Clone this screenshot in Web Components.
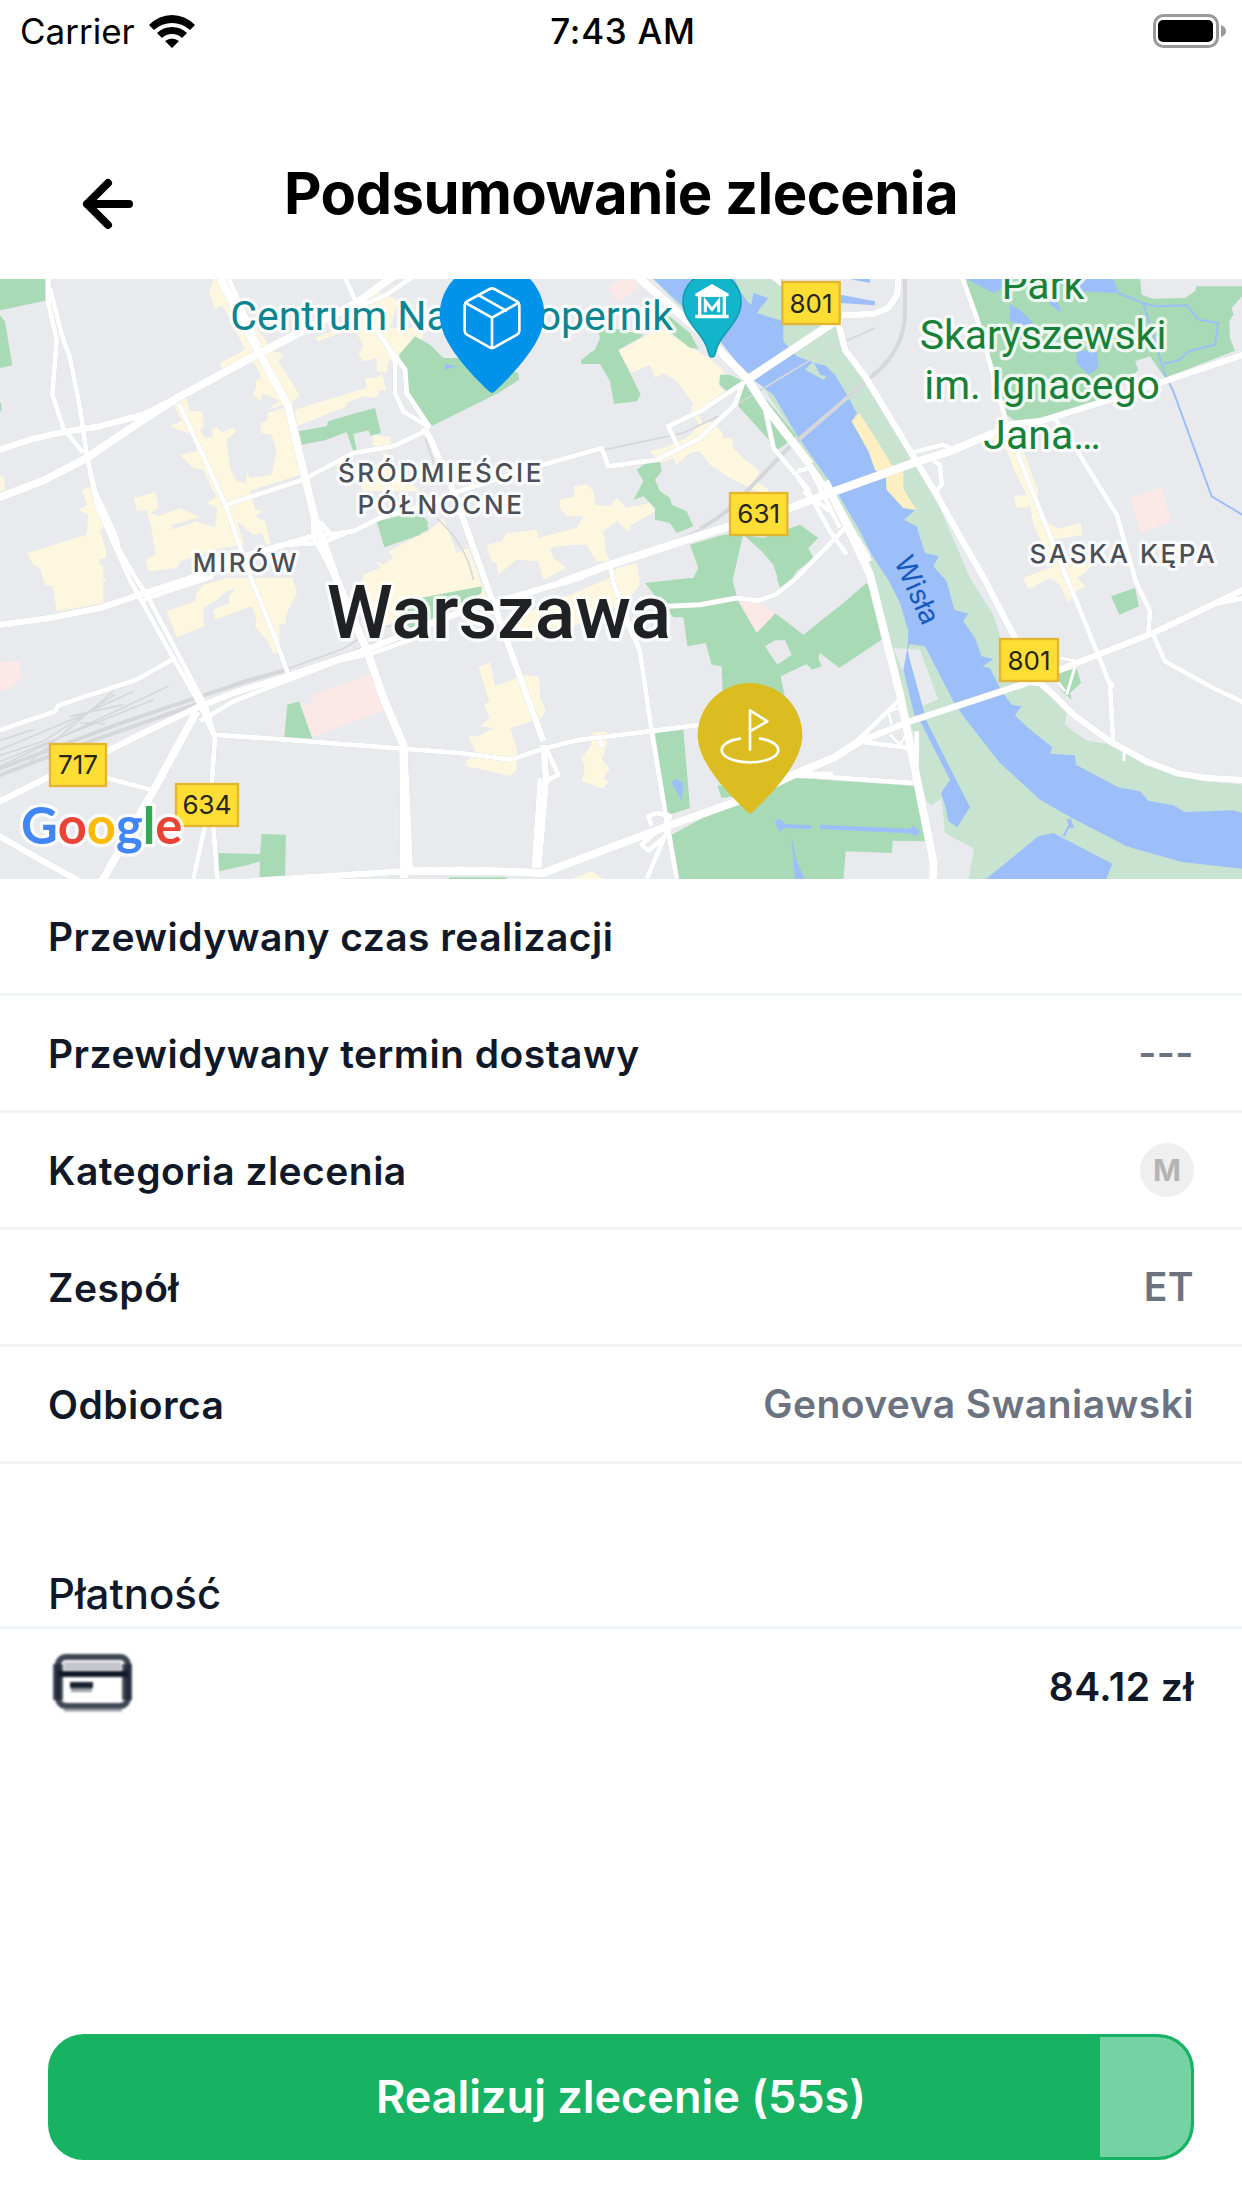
<!DOCTYPE html>
<html lang="pl">
<head>
<meta charset="utf-8">
<meta name="viewport" content="width=device-width, initial-scale=1">
<title>Podsumowanie zlecenia</title>
<style>
  html, body { margin: 0; background: #fff; }
  body { font-family: Inter, "Liberation Sans", sans-serif; color: #111827; }
</style>
</head>
<body>
<order-summary>
  <status-bar slot="status" carrier="Carrier" time="7:43 AM"></status-bar>
  <page-header slot="header">Podsumowanie zlecenia</page-header>
  <route-map slot="map"></route-map>
  <detail-row label="Przewidywany czas realizacji"></detail-row>
  <detail-row label="Przewidywany termin dostawy">---</detail-row>
  <detail-row label="Kategoria zlecenia"><size-badge>M</size-badge></detail-row>
  <detail-row label="Zespół">ET</detail-row>
  <detail-row label="Odbiorca">Genoveva Swaniawski</detail-row>
  <payment-section slot="payment" amount="84.12 zł">Płatność</payment-section>
  <countdown-button slot="action" progress="92">Realizuj zlecenie (55s)</countdown-button>
</order-summary>

<template id="order-summary">
  <style>
    :host { display: flex; flex-direction: column; min-height: 100vh; }
    footer { margin-top: auto; padding: 48px; }
  </style>
  <slot name="status"></slot>
  <slot name="header"></slot>
  <main>
    <slot name="map"></slot>
    <slot></slot>
    <slot name="payment"></slot>
  </main>
  <footer><slot name="action"></slot></footer>
</template>

<template id="status-bar">
  <style>
    :host { display: grid; grid-template-columns: 1fr auto 1fr; align-items: center; height: 60px; padding: 2px 16px 0 20px; box-sizing: border-box; font-size: 35px; line-height: 42px; color: #000; }
    .left { display: flex; align-items: center; gap: 14px; }
    .time { font-weight: 500; letter-spacing: 0.02em; }
    .battery { justify-self: end; }
    svg { display: block; }
  </style>
  <div class="left"><span class="carrier"></span>
    <svg width="46" height="33" viewBox="0 0 46 33"><path d="M0 10Q10 0 23 0t23 10l-5 5Q33 8 23 8T5 15zM8 18q6-6 15-6t15 6l-5 5q-4-4-10-4t-10 4zM16 26q7-5 14 0l-7 7z"/></svg>
  </div>
  <span class="time"></span>
  <svg class="battery" width="73" height="34" viewBox="0 0 73 34"><rect x="1.500" y="1.500" width="63" height="31" rx="9" fill="none" stroke="#999" stroke-width="3"/><rect x="5" y="6" width="55" height="22" rx="5"/><path d="M68 11q5 2 5 6t-5 6z" fill="#999"/></svg>
</template>

<template id="page-header">
  <style>
    :host { display: grid; grid-template-columns: 1fr auto 1fr; align-items: center; height: 219px; box-sizing: border-box; padding: 68px 80px 0; color: #000; }
    button { justify-self: start; padding: 0; border: 0; background: none; color: inherit; }
    h1 { margin: 0 0 22px; font-size: 58px; line-height: 70px; font-weight: 700; letter-spacing: -0.01em; }
    svg { display: block; }
  </style>
  <button type="button" aria-label="Wstecz"><svg width="56" height="56" viewBox="0 0 56 56" fill="none" stroke="currentColor" stroke-width="8" stroke-linecap="round" stroke-linejoin="round"><path d="M49 28H7M28 7L7 28l21 21"/></svg></button>
  <h1><slot></slot></h1>
</template>

<template id="detail-row">
  <style>
    :host { display: flex; align-items: center; justify-content: space-between; height: 114px; padding: 0 48px; border-bottom: 3px solid #f3f4f8; font-size: 39px; line-height: 50px; font-weight: 600; letter-spacing: 0.012em; }
    .label { padding-top: 2px; }
    .value { color: #6b7280; }
  </style>
  <span class="label"></span><span class="value"><slot></slot></span>
</template>

<template id="size-badge">
  <style>
    :host { display: flex; align-items: center; justify-content: center; width: 54px; height: 54px; border-radius: 27px; background: #efefef; color: #b4b4b4; font-size: 30px; line-height: 36px; font-weight: 700; letter-spacing: 0; }
  </style>
  <slot></slot>
</template>

<template id="payment-section">
  <style>
    :host { display: block; padding-top: 104px; }
    h2 { margin: 0; padding: 0 48px 6px; border-bottom: 3px solid #f1f3f8; font-size: 42px; line-height: 52px; font-weight: 500; }
    .row { display: flex; align-items: flex-start; justify-content: space-between; padding: 22px 48px 0 51px; }
    .amount { padding-top: 12px; font-size: 39px; line-height: 48px; font-weight: 600; letter-spacing: 0.012em; }
    svg { display: block; filter: blur(1px); }
  </style>
  <h2><slot></slot></h2>
  <div class="row">
    <svg width="84" height="66" viewBox="0 0 84 66" fill="none">
      <path d="M13 11H70V19H13z" fill="#c4c6cb"/>
      <path d="M7 13v36M76 13v36" stroke="#4b515d" stroke-width="10"/>
      <rect x="7" y="6" width="70" height="49" rx="8" stroke="#1d2636" stroke-opacity=".85" stroke-width="6"/>
      <path d="M7 23H77" stroke="#111827" stroke-width="6"/>
      <path d="M19 34H42" stroke="#182130" stroke-width="6"/><path d="M20 39H41" stroke="#9a9ea6" stroke-width="4"/>
      <path d="M13 59H71" stroke="#9a9ea6" stroke-width="3"/>
    </svg>
    <span class="amount"></span>
  </div>
</template>

<template id="countdown-button">
  <style>
    :host { display: block; }
    button { display: block; width: 100%; height: 126px; padding: 0; border: 3px solid #18b263; border-radius: 36px; color: #fff; font: 600 45px/54px Inter, sans-serif; background: linear-gradient(to right, #18b263 var(--progress), #74d2a3 var(--progress)) padding-box, #18b263; }
  </style>
  <button type="button"><slot></slot></button>
</template>

<template id="route-map">
  <style>
    :host { display: block; height: 600px; overflow: hidden; background: #e8eaed; }
    svg { display: block; width: 100%; height: 100%; }
    .park { fill: #a8dab5; } .bank { fill: #c8e4d1; } .water { fill: #9cbff9; }
    .built { fill: #fef7e0; } .health { fill: #fce8e6; } .sand { fill: #feefc3; } .land { fill: #e8eaed; }
    .roads { fill: none; stroke: #fff; stroke-linejoin: round; stroke-width: 15; filter: drop-shadow(0 0 1px #b9bcc1); }
    .wide { stroke-width: 25; } .mid { stroke-width: 20; } .thin { stroke-width: 9; }
    .rail { fill: none; stroke: #d5d7da; stroke-width: 5; }
    .stream { fill: none; stroke: #9cbff9; stroke-width: 6; }
    .halo text { stroke: #fff; stroke-opacity: .8; stroke-width: 20; stroke-linejoin: round; paint-order: stroke; }
    .area text { font-size: 78px; font-weight: 500; letter-spacing: .1em; fill: #4b4f55; }
    .poi text { font-family: Roboto, Inter, sans-serif; font-size: 123px; }
    .city { font-family: Roboto, Inter, sans-serif; font-size: 225px; font-weight: 500; fill: #202124; }
    .brand { font-family: Lato, Inter, sans-serif; font-size: 152px; font-weight: 700; }
    .shield rect { fill: #fedd35; stroke: #e2b631; stroke-width: 7; }
    .shield text { font-size: 78px; fill: #26261f; }
    .line { fill: none; stroke: #fff; stroke-width: 8; stroke-linecap: round; stroke-linejoin: round; }
    text { text-anchor: middle; }
  </style>
  <svg viewBox="0 0 3726 1800" preserveAspectRatio="xMidYMid slice" role="img" aria-label="Mapa">
    <defs><path id="drop" d="M0 0Q-5 0-12-8C-60-55-157-150-157-234A157 157 0 0 1 157-234C157-150 60-55 12-8Q5 0 0 0Z"/></defs>

    <!-- land cover, north-west -->
    <g transform="translate(0 -3)">
      <g class="park"><path d="M0 0H135V68L0 97zM0 112L15 130 37 262 0 270zM0 375H4V400H0z"/></g>
      <g class="built">
        <path d="M640 3H675L735 110 800 190 805 215 850 228 835 250 898 350 880 368 872 400 850 380 800 395 840 370 790 345 780 370 760 350 770 320 765 310 785 300 768 262 745 250 665 270 660 255 735 215 690 120 665 80 645 95 628 40z"/>
        <path d="M945 180L1020 150 1130 40 1180 60 1195 70 1170 150H1270V180L1190 240 1165 250 1160 285 1130 280V240L1090 250 1075 230 1090 200 1070 165H1020L955 190z"/>
        <path d="M885 395L1030 350 1100 330 1095 300H1130L1145 285 1160 338 1140 335 1130 360 1090 355 1040 375 1035 388 890 445z"/>
        <path d="M520 375L560 360 570 400H605L612 440 600 455 615 480 640 475 635 455 650 447 665 462 700 450 708 460 680 485 690 570 710 610 740 615 738 583 750 600 815 590 830 520 815 470 785 465 780 437 800 430 805 405 850 390 870 410 900 590 750 638 765 695 785 700 765 715 795 730 812 800H800L785 765 760 770 712 730 732 800 655 812 645 750 652 690 620 675 650 655 640 640 610 575 580 570 540 530 605 515 575 470 510 445 545 430z"/>
        <path d="M402 660L468 642 475 690 450 705 475 715 540 690 600 718 515 740V755L590 730 650 750 655 812 540 850 530 870 445 880 437 845 467 830 455 755 440 697 410 700z"/>
        <path d="M245 635L270 627 300 690 320 730 300 760 318 815V840L298 845V862H310V975L170 1000 160 925 130 906 120 870 100 860 82 825 260 770 265 710 235 695 262 680z"/>
        <path d="M0 595H10L15 635 0 640zM1118 470L1172 478V500L1135 505 1118 500zM1150 520L1215 600 1260 640 1090 640 1080 620 1150 560z"/>
        <path d="M1075 930L1090 890 1140 870 1130 850 1150 860 1180 840 1165 820 1285 760 1330 720 1370 825 1405 810 1460 960 1260 975 1150 1050z"/>
      </g>
      <g class="park"><path d="M897 460L980 445 985 430 1050 410 1125 390 1143 465 1112 473 1105 457 1060 468 1070 515 1060 520 1040 462 975 487 905 500zM1130 730L1260 700 1285 735 1260 770 1153 808z"/></g>
    </g>

    <!-- land cover, north -->
    <g transform="translate(1230 -3)">
      <g class="park">
        <path d="M-33 230L15 175 60 200 100 240H160L325 285 327 305 265 345 64 445-10 350-15 270z"/>
        <path d="M0 740L50 730 55 755 0 780z"/>
      </g>
      <g class="health"><path d="M595 30L620 12 650 3H670L687 28 622 75z"/></g>
      <g class="built">
        <path d="M625 220L695 180 750 150 840 205 895 240 935 270 945 300 925 320 945 340 860 400 880 440 900 430 935 460 940 480 965 480 970 510 1000 540 1050 580 1035 605 1080 640 1075 650 1030 635 960 600 900 560 870 520 840 525 800 560 790 540 750 555 720 520 760 510 830 480 870 440 840 400 850 375 830 350 800 310 760 285 735 300 720 260 665 285z"/>
        <path d="M490 625L530 618 550 640 555 680 600 685 620 660 650 690 720 675 735 700 665 740 655 760 620 730 580 760 590 830 600 850H560L530 800 480 800 420 810 430 840 470 870 400 906 385 850 320 845 265 890 260 855 245 850 230 800 275 790 290 765 380 755 385 780 500 750 520 715 470 715 450 690V665L495 655zM620 870L680 855 690 920 650 970 480 1050 340 1090 290 1030 600 900z"/>
      </g>
      <g class="park">
        <path d="M560 140L700 170 690 180 625 215 692 350 680 370 612 378 600 310 570 258H515L512 248 540 225 555 215 570 180z"/>
        <path d="M680 575L710 555 750 552 755 580 735 605 750 640 780 660 785 680 830 700 850 745 800 765 780 735 735 725V690L700 655 670 665 690 630 700 610z"/>
        <path d="M840 800L940 770 1000 765 985 832 1055 820 1000 770 1060 780 1170 740 1225 780 1195 810 1210 840 1160 880 1135 920H1110L1090 860 1055 820 985 832 965 920H840L865 870z"/>
      </g>
      <path class="water" d="M105 257L140 265 105 275z"/>
    </g>

    <!-- river valley and the eastern district -->
    <g transform="translate(2460 -3)">
      <path class="bank" d="M-500 3H-115L0 140H45L75 215 150 340 275 545 360 690 450 900 520 1010 545 1090 590 1210 660 1220 740 1305 735 1340 800 1388 880 1400 980 1465 1160 1510 1270 1520V1806H445L462 1712 375 1665 365 1560 335 1583 320 1570 300 1500 290 1400 240 1230 215 1100 155 906 135 850 155 830 20 630-70 480-230 240-380 130z"/>
      <g class="park"><path d="M-475 95L-390 165-365 212-390 210-440 170zM-300 290L-270 290-230 310-275 345-302 318zM-300 210L-130 400-70 475-127 515-245 385-230 310-290 240z"/></g>
      <path class="water" d="M-500 3H-255L-245 30-215 75-205 78-200 45-155 60-190 105-110 130V190L-70 235-5 258 15 262 45 290 75 340 110 405 95 430 150 520 165 575 198 600 200 635 250 690 285 697 252 725 290 745 315 825 357 835 340 865 380 910 403 995 445 1007 430 1030 465 1080 485 1135 520 1143 488 1165 510 1170 545 1240 575 1280 605 1285 585 1312 625 1350 697 1408 690 1427 765 1432 768 1460 895 1528 960 1540 985 1568 1060 1582 1095 1602 1240 1597 1270 1605V1773L1085 1752 920 1705 760 1622 660 1565 540 1455 430 1315 400 1270 315 1105 270 1098 262 1115 265 1060 240 975 205 906 155 830 120 760 55 650 0 570-70 470-140 350-220 290-300 190-450 50z"/>
      <path class="bank" d="M-45 275L-20 250 0 290 20 295 10 305z"/>
      <path class="sand" d="M95 430L118 405 160 470 215 560 250 575V630L270 665 290 695 250 690 200 635 198 600 165 575 145 520z"/>
      <path class="park" d="M437 3H960L965 50 1000 62 1095 60 1125 40 1130 25H1270V50L1235 90 1240 110 1228 130 1230 180 1245 218 1035 300 990 235 945 250 955 275 860 370 640 432 590 432 560 410z"/>
      <path class="water" d="M440 3H560V25L520 45zM700 3H875L890 45 760 40zM570 80L600 95 635 130 640 150 570 130zM770 220L830 215 835 270 805 290 770 255zM690 60L710 65 725 105 690 80zM62 50L165 70V82L62 75zM90 3H150V15L100 5z"/>
      <path class="stream" d="M875 3L895 45 970 75 1035 290 1060 340 1175 655 1270 712M965 75L1010 85 1100 82 1135 125 1195 135 1185 200 1105 220 1080 245 1030 258"/>
      <path class="health" d="M930 660L1025 628 1055 730 963 765z"/>
      <path class="built" d="M500 475L560 480 610 520 655 640 650 670 685 735 715 752 782 735 787 770 700 785 740 850 820 860 800 880 770 900 797 925 770 940 745 975 720 920 690 900 625 935 610 900 700 865 640 740 630 685 590 690 582 655 620 650 580 570 560 515z"/>
    </g>

    <!-- land cover, south-west -->
    <g transform="translate(0 897)">
      <g class="built"><path d="M130 0H320L315 10 303 15V75L170 100 160 25 135 22zM500 100L585 70 590 45 610 20 680 0H880L890 45 858 110V135L838 140V225H820L800 185 765 145 770 120 755 85 645 125 640 95 690 75 685 60 705 30 680 40 650 65 610 90 612 145 530 178z"/></g>
      <g class="health"><path d="M0 252L60 248 63 305 20 340 0 332zM905 388L940 370 935 352 1110 290 1157 395 937 478z"/></g>
      <g class="park"><path d="M862 380L897 370 937 482 853 477zM655 825L780 828 785 768 858 770 855 903H778L780 850 740 862 657 880z"/></g>
    </g>

    <!-- land cover, south -->
    <g transform="translate(1230 897)">
      <path class="built" d="M205 268L240 252 255 325 345 292 387 297 390 360 407 395 395 420 300 450 320 510V575L300 595 240 580 170 565V545L200 530 175 475H205L250 450 210 445 240 420 222 380 238 370zM545 465L590 460V500L575 545 600 570 580 600 597 610 580 632 515 610 525 570 515 540 545 500zM485 903L545 880 580 903z"/>
      <path class="park" d="M30 60L215 25V45L120 100 0 150-30 110zM705 15L840 0H965L985 70 1095 105 1180 170 1300 75 1370 15 1385 30 1415 185 1288 270 1230 225 1225 240 1235 265 1205 275 1190 258 1112 295 1125 360V420H940L935 265 905 260 887 195 832 205 820 118H790L740 60zM735 465L820 455 840 690 785 708 770 700zM922 622L950 625 970 655 935 660zM785 770L980 665 1160 600 1470 620 1515 625 1548 790 1448 788 1445 825 1307 820 1300 906H803zM117 898H290V906H117zM1100 0H1135L1130 20 1110 30z"/>
      <path class="land" d="M1065 205L1095 187H1125L1145 230 1102 260z"/>
      <path class="health" d="M985 70L1045 75 1097 105 1040 165z"/>
      <path class="water" d="M785 615L797 602 820 615 815 668zM1095 730L1110 722 1125 738 1203 742V753L1125 750 1108 762zM1230 740L1500 752 1510 743 1530 760 1520 775 1500 766 1230 753zM1143 770L1160 850 1185 903H1155z"/>
    </g>

    <!-- land cover, south-east -->
    <g transform="translate(2460 897)">
      <path class="land" d="M220 210L300 215 355 365 305 385 290 380z"/>
      <path class="water" d="M262 210L250 275 283 410 303 435 390 605 363 645 375 680 385 730 412 747 450 688 320 430 268 240zM498 903L655 775 700 765 877 857 858 906zM727 775L745 740 740 725 752 720 762 750H747L735 775z"/>
      <path class="park" d="M873 55L945 30 957 85 898 110zM700 290L770 270 783 315 750 345 755 365 725 340z"/>
    </g>

    <g class="rail">
      <path transform="translate(0 897)" d="M-10 490L100 455M-10 520L250 410 400 340M-10 535L130 490 345 350M-10 555L300 430 460 365M-10 570L220 460 505 325M80 560L340 340M210 415L370 380M240 435L315 437"/>
      <path stroke-width="12" transform="translate(0 897)" d="M-10 575L150 515 350 440 600 355 740 310 860 275M-10 595L200 515 600 375"/>
      <path transform="translate(0 897)" d="M600 355L740 305 870 270 1030 212 1130 150 1260 130M640 365L1050 222 1240 150"/>
      <path transform="translate(1230 -3)" d="M735 812L870 755M585 515L820 465 925 415M980 380L1260 210 1395 150M45 480L80 580M80 720Q170 800 190 906"/>
      <path stroke-width="12" transform="translate(1230 -3)" d="M870 752Q950 710 1010 640L1130 515 1270 395 1380 300Q1485 220 1485 100V0"/>
    </g>

    <g class="roads">
      <g transform="translate(0 -3)">
        <path class="wide" d="M-20 665L130 608 260 540 430 425 540 355 780 225 1070 75 1200 -20"/>
        <path class="mid" d="M-10 518L100 482 200 460 300 445 430 410 550 350M540 915L715 840 940 775"/>
        <path class="wide" d="M660 0L775 220 865 385 915 600 945 720 1010 906 1050 1000 1100 1115 1150 1260 1210 1400 1213 1800"/>
        <path d="M685 0L775 200M145 0V75L170 185 157 350 190 450 250 525M150 30L185 170 210 240 240 390 262 540 285 640 350 780 355 810 410 906 440 950 540 1140 620 1290 645 1380 635 1520M270 580L290 680 390 906 520 1140 600 1280 640 1370"/>
        <path d="M535 375L615 545 680 690 755 906 825 1080 865 1190M680 680L910 605 1060 525 1180 505 1275 460"/>
        <path d="M860 800L960 795 1040 765M940 720V775L1010 906M960 730L1000 780 960 800M940 775L1060 760 1140 720 1260 685 1360 650M1035 0L1070 75 1160 200 1215 275 1220 345 1290 450M1160 200L1185 250V345L1210 400 1290 450M1070 90L1160 50 1240 -5"/>
      </g>
      <g transform="translate(1230 -3)">
        <path class="mid" d="M40 450L60 480 130 640 225 906 270 1030 400 1390"/>
        <path d="M130 645L400 560 560 515 575 510 595 565 740 545 800 515 870 480 975 380 1000 310M1000 315L870 400 775 445 805 510M1065 390L1090 510 1200 640"/>
        <path class="wide" d="M670 -15L890 180 1010 300 1065 385 1200 560M1290 120L1005 310M450 915L600 860 830 785 960 745 1140 690 1260 645 1510 555 1620 520 1750 465"/>
        <path d="M1200 560L1290 690 1380 850M1160 580L1200 570 1290 750M1165 600L1200 650 1260 760 1310 830M1180 640L1260 700M1080 -10L1130 30M600 855L610 915 690 1120 725 1360 765 1600 800 1803M1310 745L1160 900 1100 948 1045 968 980 960 870 980 770 985"/>
      </g>
      <g transform="translate(2460 -3)">
        <path d="M425 -5L470 120 505 240 550 400 560 440 600 545 740 900 790 1020 870 1220 880 1400M700 415L760 500 890 710 945 900M270 530L290 520 370 500 400 515M340 550L360 560 365 620 345 645"/>
        <path class="mid" d="M235 0L232 50 205 90 160 108 65 112M520 465L560 440 660 430 870 365 1270 230M50 115L75 215 135 295 350 650 400 740 495 906 595 1100"/>
        <path class="wide" d="M15 610L65 710 150 890 190 1050 240 1250 270 1400 310 1600 340 1750V1810"/>
      </g>
      <g transform="translate(0 897)">
        <path class="mid" d="M-10 142L150 120 300 90 420 50 620 -15M-10 675L150 595 310 525 430 465 600 385 700 345 860 295 1100 215 1260 150 1390 100 1530 60 1750 -5M-10 770L130 850 240 910M750 910L1210 880 1400 875"/>
        <path d="M420 70L480 48 640 -5M600 430L700 370 1010 250 1120 225 1260 175M320 600L450 635M640 470L900 488 1210 512 1380 525 1535 545 1630 512 1730 487 1950 460 2100 440M615 745L580 903M640 745L652 903M1215 500L1232 880"/>
        <path class="wide" d="M590 400L470 620 300 920"/>
        <path d="M-10 460L165 400 175 382 410 305 520 243"/>
      </g>
      <g transform="translate(1230 897)">
        <path class="wide" d="M-20 880L200 878 400 885 770 745 980 670 1150 590 1270 540 1350 490"/>
        <path class="mid" d="M1150 590L1270 590M400 500L408 600 385 870"/>
        <path d="M410 515L445 590 415 605M390 600L372 870M765 745L780 715 740 705 715 715 725 745M740 760L695 800 715 818 760 780M775 750L710 903M570 485L577 507M640 110L690 220"/>
      </g>
      <g transform="translate(2460 897)">
        <path class="mid" d="M120 490L270 430 620 315 720 275 1000 165 1270 35M620 312L660 315 700 350 760 410 870 490 980 550 1070 585 1160 600 1270 606"/>
        <path d="M-10 595L200 610 280 615M940 -5L990 100 985 165M1000 170L1035 250 1180 330 1280 378M1180 80L1270 60M110 490L235 370M130 492L270 510M290 460L290 560M875 310V330"/>
        <path class="thin" d="M205 400L215 440M210 470L240 500 270 450M205 400L240 390M720 240L770 250 740 350M700 295L735 340M912 520V550"/>
      </g>
    </g>

    <g class="halo">
      <g class="poi">
        <g fill="#0c8590"><text x="1355" y="154">Centrum Nauki Kopernik</text></g>
        <g fill="#188038"><text x="3129" y="59">Park</text><text x="3129" y="210">Skaryszewski</text><text x="3126" y="359">im. Ignacego</text><text x="3126" y="510">Jana…</text></g>
      </g>
      <g class="area"><text x="1323" y="609">ŚRÓDMIEŚCIE</text><text x="1323" y="705">PÓŁNOCNE</text><text x="738" y="878">MIRÓW</text><text x="3370" y="852">SASKA KĘPA</text></g>
      <text class="city" x="1497" y="1077">Warszawa</text>
    </g>
    <text transform="translate(2725 945) rotate(66)" font-size="84" fill="#185abc">Wisła</text>

    <g class="shield">
      <rect x="2347" y="9" width="172" height="126"/><text x="2433" y="101">801</text>
      <rect x="2190" y="642" width="172" height="126"/><text x="2276" y="732">631</text>
      <rect x="3000" y="1080" width="174" height="126"/><text x="3087" y="1172">801</text>
      <rect x="150" y="1395" width="168" height="126"/><text x="234" y="1486">717</text>
      <rect x="528" y="1515" width="186" height="126"/><text x="621" y="1604">634</text>
    </g>

    <g transform="translate(2136 234)">
      <path d="M0 0Q-7 0-10-12C-20-70-87-100-87-166A87 87 0 0 1 87-166C87-100 20-70 10-12Q7 0 0 0Z" fill="#12b5cb" stroke="#129eaf" stroke-width="5"/>
      <path d="M-50-182V-190L0-219 50-190V-182H42V-127H50V-116H-50V-127H-42V-182zM-32-180V-127H32V-180z" fill="#fff" fill-rule="evenodd"/>
      <path d="M-20-134V-168L0-143 20-168V-134" fill="none" stroke="#fff" stroke-width="9"/>
    </g>
    <g transform="translate(1476 342)">
      <use href="#drop" fill="#0093e9"/>
      <path class="line" d="M-7-312Q0-316 7-312L75-275Q82-271 82-264V-186Q82-179 75-175L7-137Q0-133-7-137L-75-175Q-82-179-82-186V-264Q-82-271-75-275zM-79-270L0-226 79-270M0-226V-135M-39-293L42-247"/>
    </g>
    <g transform="translate(2250 1603)">
      <use href="#drop" fill="#dbbc21"/>
      <path class="line" d="M0-191V-309L52-276 0-246M-30-224C-60-220-85-207-85-189C-85-169-47-153 0-153S85-169 85-189C85-207 60-220 30-224"/>
    </g>
    <g class="halo">
      <text class="brand" x="305" y="1696"><tspan fill="#4285f4">G</tspan><tspan fill="#ea4335">o</tspan><tspan fill="#fbbc05">o</tspan><tspan fill="#4285f4">g</tspan><tspan fill="#34a853">l</tspan><tspan fill="#ea4335">e</tspan></text>
    </g>
  </svg>
</template>

<script>
  class TemplateElement extends HTMLElement {
    constructor() {
      super();
      const template = document.getElementById(this.localName);
      this.attachShadow({ mode: 'open' }).append(template.content.cloneNode(true));
    }
    fill(selector, attribute) {
      this.shadowRoot.querySelector(selector).textContent = this.getAttribute(attribute) || '';
    }
  }
  customElements.define('order-summary', class extends TemplateElement {});
  customElements.define('status-bar', class extends TemplateElement {
    connectedCallback() { this.fill('.carrier', 'carrier'); this.fill('.time', 'time'); }
  });
  customElements.define('page-header', class extends TemplateElement {});
  customElements.define('route-map', class extends TemplateElement {});
  customElements.define('detail-row', class extends TemplateElement {
    connectedCallback() { this.fill('.label', 'label'); }
  });
  customElements.define('size-badge', class extends TemplateElement {});
  customElements.define('payment-section', class extends TemplateElement {
    connectedCallback() { this.fill('.amount', 'amount'); }
  });
  customElements.define('countdown-button', class extends TemplateElement {
    connectedCallback() { this.style.setProperty('--progress', this.getAttribute('progress') + '%'); }
  });
</script>
</body>
</html>
